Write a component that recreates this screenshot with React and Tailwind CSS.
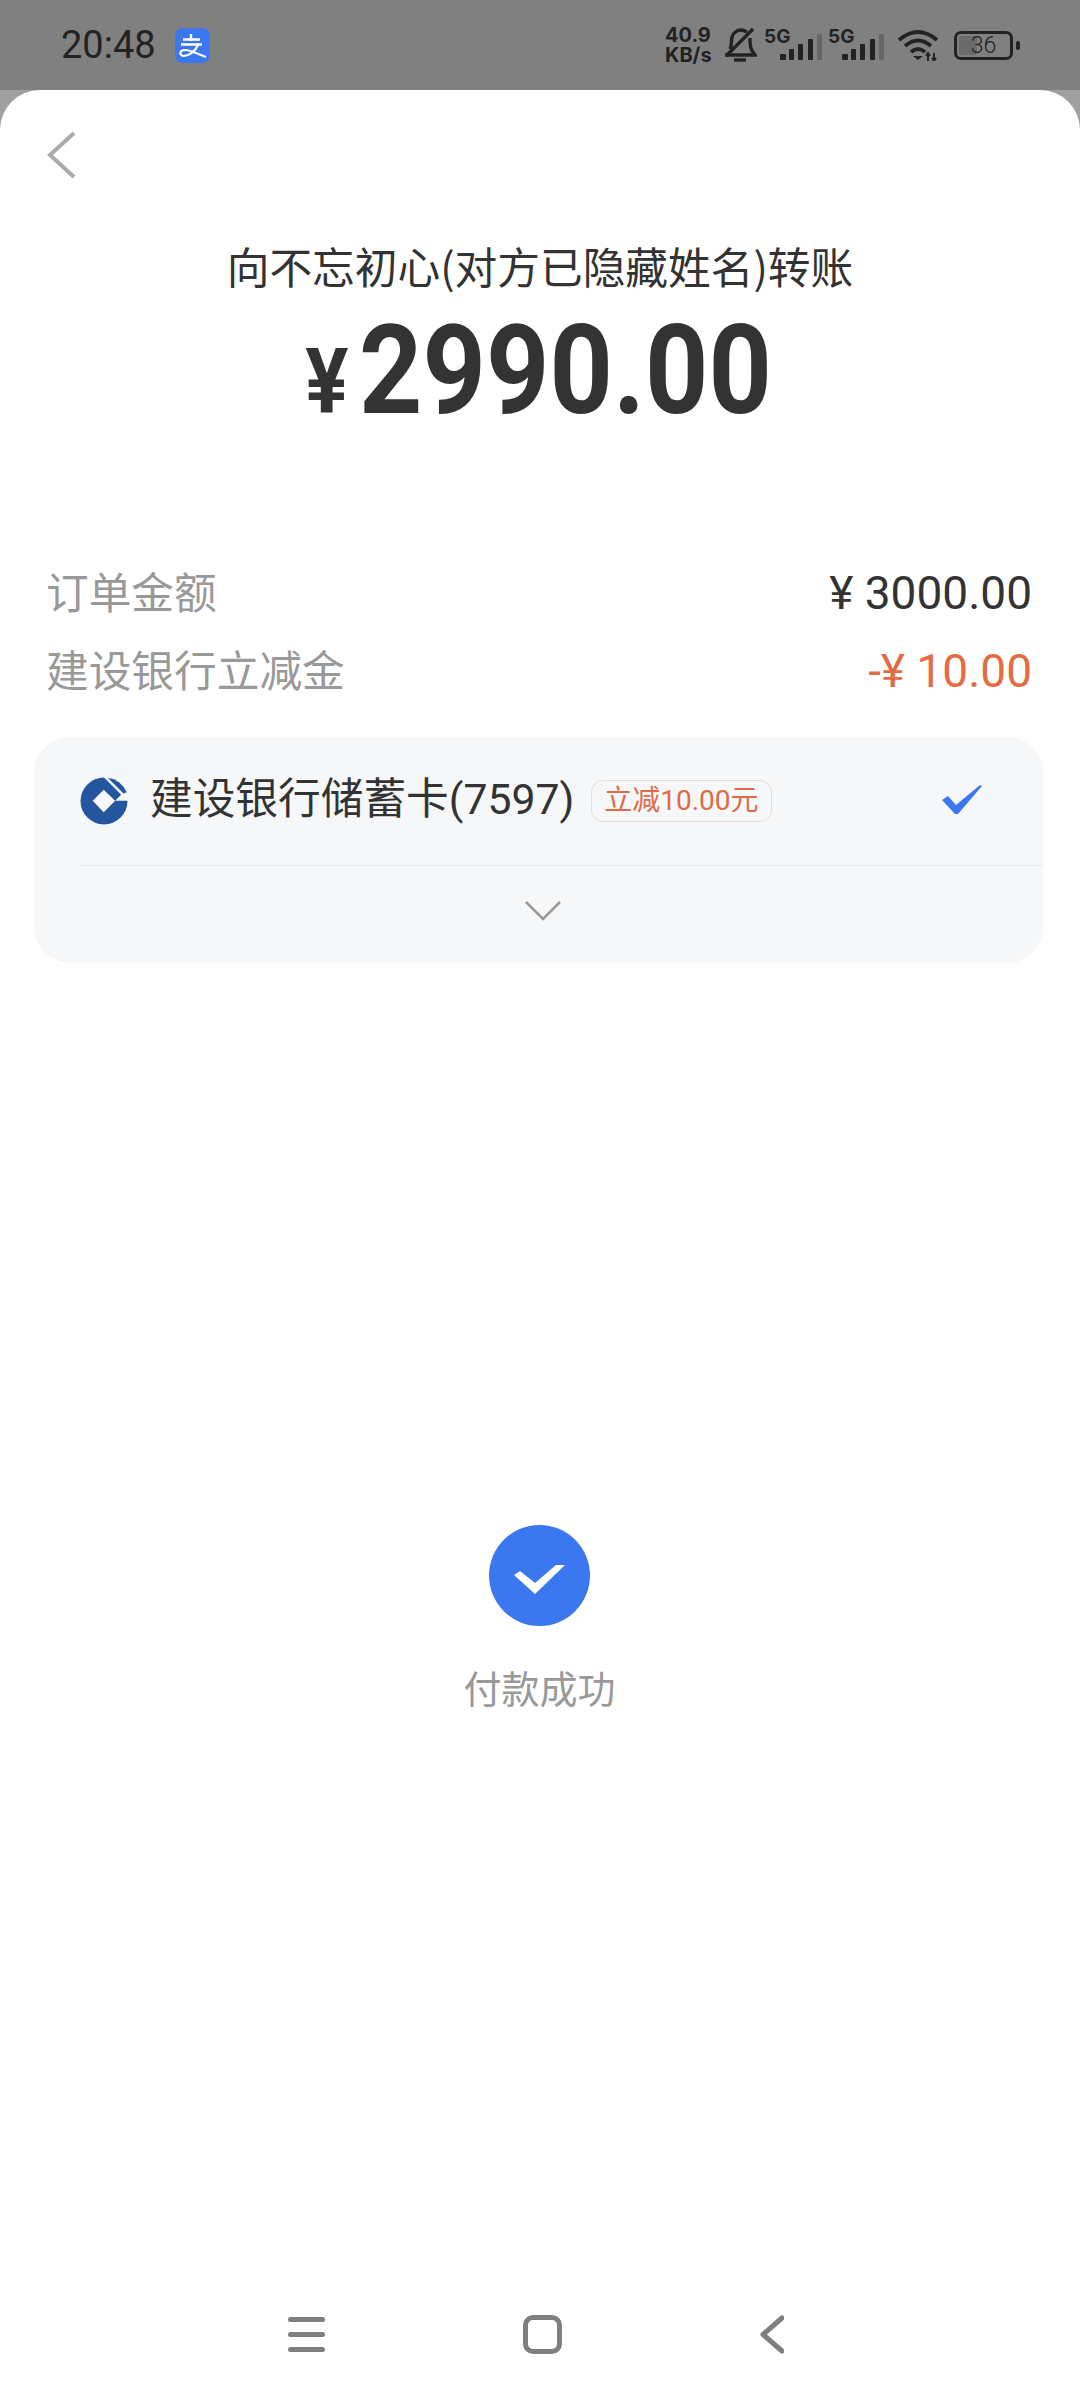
const cjk = "font-['Noto_Sans_CJK_SC',sans-serif]";
const num = "font-['Roboto','Noto_Sans_CJK_SC',sans-serif]";

function AlipayIcon() {
  return (
    <svg width="35" height="35" viewBox="0 0 35 35" fill="none" stroke="#fff" strokeWidth="2.4">
      <rect width="35" height="35" rx="8" fill="#3b78f0" stroke="none" />
      <path d="M16 6 V13 M8 11.5 H25 M6 16.5 H27" />
      <path d="M23 17 C20 24 13 28 9 28 C4 28 4 22 10 22 C16 22 22 26 31 29" strokeWidth="2.2" />
    </svg>
  );
}

function BellOff() {
  return (
    <svg width="34" height="36" viewBox="0 0 34 36" fill="none" stroke="#222" strokeWidth="3.4">
      <path d="M7 22 C9 18 8 14 9 10 C10 6 14 3 18 3 C20 3 22 4 24 5" />
      <path d="M27 11 C27 17 27 23 32 28 H2" />
      <path d="M11 33 H23" />
      <path d="M3 29 L30 2" />
    </svg>
  );
}

function Cell({ overlap }) {
  return (
    <div className="flex items-start">
      <span className="font-['Inter',sans-serif] font-bold text-[19px] leading-[16px] -mt-[2px] w-[26px]">5G</span>
      <svg width="42" height="26" viewBox="0 0 42 26" className={`${overlap} mt-[3px]`}>
        <rect x="0" y="20" width="6" height="6" rx="1" fill="#222" />
        <rect x="9" y="15" width="5" height="11" rx="1" fill="#222" />
        <rect x="18" y="10" width="5" height="16" rx="1" fill="#222" />
        <rect x="28" y="5" width="5" height="21" rx="1" fill="#222" />
        <rect x="37" y="0" width="5" height="26" rx="1" fill="#666" />
      </svg>
    </div>
  );
}

function Wifi() {
  return (
    <svg width="43" height="32" viewBox="0 0 43 32" fill="none" stroke="#222" strokeWidth="3.8">
      <path d="M2 11 Q21 -5 40 11" />
      <path d="M8 17 Q21 6 34 17" />
      <path d="M14 23 Q21 17 28 23" />
      <path d="M16 27 H26 L21 31 Z" fill="#222" stroke="none" />
      <path d="M31 32 V24 M29 27 L31 24 L33 27 M37 24 V32 M35 29 L37 32 L39 29" strokeWidth="2" />
    </svg>
  );
}

function Battery() {
  return (
    <div className="flex items-center gap-[3px]">
      <div className="relative w-[59px] h-[29px] rounded-[7px] border-[3px] border-[#222] flex items-center justify-center">
        <div className="absolute left-[2px] top-[2px] bottom-[2px] w-[18px] rounded-[3px] bg-[#6a6a6a]" />
        <span className={`${num} relative font-light text-[23px] leading-none`}>36</span>
      </div>
      <div className="w-[4px] h-[9px] rounded-[2px] bg-[#222]" />
    </div>
  );
}

function StatusBar() {
  return (
    <div className="h-[90px] flex items-center justify-between pl-[61px] pr-[60px] text-[#222]">
      <div className="flex items-center gap-[19px]">
        <span className={`${num} font-[450] text-[38px]`}>20:48</span>
        <AlipayIcon />
      </div>
      <div className="flex items-center">
        <div className="font-['Inter',sans-serif] font-bold text-[20px] leading-[20px] w-[48px]">
          <div>40.9</div>
          <div>KB/s</div>
        </div>
        <div className="ml-[10px] mr-[7px]"><BellOff /></div>
        <Cell overlap="-ml-[10px]" />
        <div className="ml-[6px] mr-[13px]"><Cell overlap="-ml-[12px]" /></div>
        <div className="mr-[14px]"><Wifi /></div>
        <Battery />
      </div>
    </div>
  );
}

function CcbLogo() {
  return (
    <svg width="48" height="48" viewBox="10.3 10.3 46 46" className="shrink-0">
      <circle cx="33.3" cy="33.3" r="22.5" fill="#23569f" />
      <path d="M33 22.5 L44 33 L33 44 L22.5 33 Z" fill="#f6f7f9" />
      <path d="M44 33 L49.75 27.25 L20 -2.5 H70 V33 Z" fill="#f6f7f9" />
      <path d="M37 11 A22.5 22.5 0 0 1 55 25 L52 26 Z" fill="#23569f" />
    </svg>
  );
}

function Row({ label, value, valueColor }) {
  return (
    <div className="h-[60px] flex items-center justify-between pl-[46px] pr-[48px]">
      <span className={`${cjk} text-[42.7px] text-[#999] pb-[5px]`}>{label}</span>
      <span className={`${num} text-[46px] ${valueColor}`}>{value}</span>
    </div>
  );
}

export default function App() {
  return (
    <div className="h-[2400px] flex flex-col bg-[#808080]">
      <StatusBar />
      <div className="flex-1 flex flex-col bg-[#a0a0a0]">
        <div className="flex-1 flex flex-col bg-white rounded-t-[40px]">
          {/* back */}
          <svg width="30" height="50" viewBox="0 0 30 50" fill="none" stroke="#aaa" strokeWidth="4" className="ml-[46px] mt-[40px]">
            <path d="M28 3 L4 25 L28 47" />
          </svg>

          <div className={`${cjk} h-[60px] leading-[60px] text-[42.7px] text-center text-[#333] mt-[55px]`}>向不忘初心(对方已隐藏姓名)转账</div>

          {/* amount */}
          <div className={`${num} flex items-baseline justify-center scale-x-[0.885] mt-[13px] pr-[3px] text-[#333] font-bold leading-none`}>
            <span className="text-[91px] mr-[12px]">¥</span>
            <span className="text-[125px]">2990.00</span>
          </div>

          <div className="mt-[130px] flex flex-col gap-[18px]">
            <Row label="订单金额" value="¥ 3000.00" valueColor="text-[#333]" />
            <Row label="建设银行立减金" value="-¥ 10.00" valueColor="text-[#e36c45]" />
          </div>

          {/* bank card */}
          <div className="mt-[36px] ml-[34px] w-[1009px] rounded-[36px] bg-[#f6f7f9]">
            <div className="h-[128px] flex items-center pl-[46px] pr-[61px]">
              <CcbLogo />
              <span className={`${num} text-[42.7px] text-[#333] ml-[22px] pb-[4px]`}>建设银行储蓄卡(7597)</span>
              <span className={`${num} h-[42px] ml-[17px] px-[12px] rounded-[12px] border-[1.5px] border-[#efd9cf] text-[28px] leading-[39px] text-[#dd6b45]`}>立减10.00元</span>
              <svg width="40" height="30" viewBox="0 0 40 30" className="ml-auto -mt-[3px]">
                <path d="M0 15 L6 11 L14 20 L38 0 L40 1 L16 29 L13 29 Z" fill="#3b78f0" />
              </svg>
            </div>
            <div className="ml-[46px] h-[1px] bg-[#e4e6e9]" />
            <div className="h-[97px] flex items-center justify-center pl-[8px] pb-[8px]">
              <svg width="36" height="22" viewBox="0 0 36 22" fill="none" stroke="#999" strokeWidth="2.5">
                <path d="M1 2 L18 19 L35 2" />
              </svg>
            </div>
          </div>

          {/* result */}
          <div className="mt-[562px] flex flex-col items-center pr-[1px]">
            <div className="w-[101px] h-[101px] rounded-full bg-[#3b78f0] flex items-center justify-center">
              <svg width="52" height="30" viewBox="0 0 52 30" className="mt-[8px]">
                <path d="M0 10 L6 6 L21 18 L42 0 L51 0 L21 29 Z" fill="#fff" />
              </svg>
            </div>
            <div className={`${cjk} h-[54px] leading-[54px] text-[38px] text-[#999] mt-[34px]`}>付款成功</div>
          </div>

          {/* nav bar */}
          <div className="mt-auto pb-[46px] pr-[9px] flex items-center justify-center gap-[198px]">
            <div className="flex flex-col gap-[10px] w-[37px]">
              <div className="h-[5px] rounded-full bg-[#7f7f7f]" />
              <div className="h-[5px] rounded-full bg-[#7f7f7f]" />
              <div className="h-[5px] rounded-full bg-[#7f7f7f]" />
            </div>
            <div className="w-[39px] h-[39px] rounded-[10px] border-[5px] border-[#7f7f7f]" />
            <svg width="24" height="39" viewBox="0 0 24 39" fill="none" stroke="#7f7f7f" strokeWidth="5" strokeLinecap="round" strokeLinejoin="round">
              <path d="M22 3 L3 19.5 L22 36" />
            </svg>
          </div>
        </div>
      </div>
    </div>
  );
}
